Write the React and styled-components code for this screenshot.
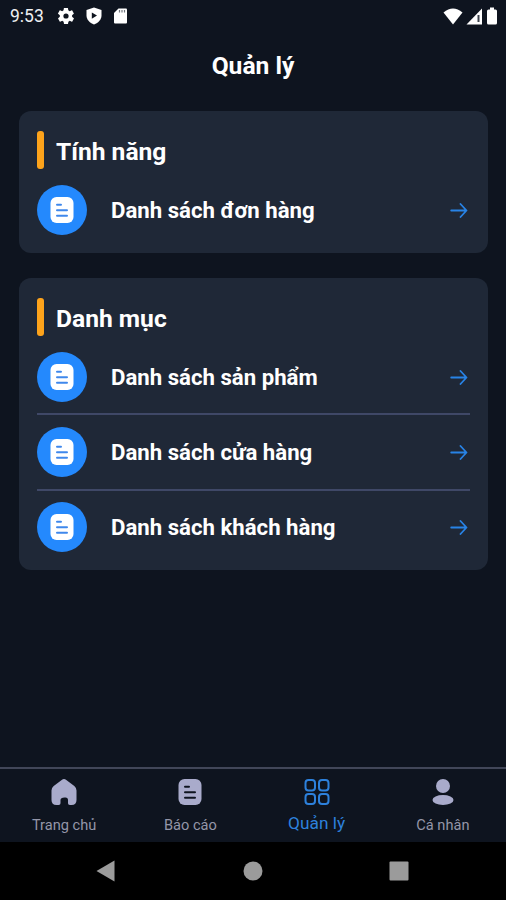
import React, {useState} from 'react'
import styled, {createGlobalStyle} from 'styled-components'

// STYLED COMPONENTS

const GlobalStyle = createGlobalStyle`
* {
    box-sizing: border-box;
}
body {
    margin: 0;
    background: #0e141f;
    font-family: Roboto, "Noto Sans", sans-serif;
}
`;

const Screen = styled.div`
display: flex;
flex-direction: column;
width: 506px;
height: 900px;
overflow: hidden;
background: #0e141f;
color: #fff;
`;

// Status bar styling
const StatusBar = styled.div`
display: flex;
justify-content: space-between;
align-items: center;
height: 32px;
padding: 0 8px 0 10px;
`;
const StatusGroup = styled.div`
display: flex;
align-items: center;
gap: ${props => props.$gap};
`;
const Clock = styled.span`
width: 36px;
font-size: 17.5px;
color: #eef0f3;
`;

const Title = styled.h1`
margin: 0;
height: 79px;
line-height: 68px;
text-align: center;
font-size: 24.6px;
font-weight: 700;
`;

// Cards with the menu rows
const Content = styled.div`
flex: 1;
display: flex;
flex-direction: column;
gap: 25px;
padding: 0 18px 0 19px;
`;
const Card = styled.section`
padding: 20px 18px 18px;
border-radius: 12px;
background: #1f2837;
`;
const CardHeading = styled.div`
display: flex;
align-items: center;
gap: 12px;
height: 38px;
margin-bottom: 16px;
`;
const Accent = styled.span`
width: 7px;
height: 38px;
border-radius: 3px;
background: #fda31b;
`;
const CardTitle = styled.h2`
margin: 0;
padding-top: 3px;
font-size: 24.6px;
line-height: 28px;
font-weight: 700;
`;
const Row = styled.div`
display: flex;
align-items: center;
cursor: pointer;
& + & {
    margin-top: 11px;
    padding-top: 12px;
    border-top: 2px solid #3f4867;
}
& + &:last-child {
    margin-top: 12px;
    padding-top: 11px;
}
`;
const RowIcon = styled.div`
display: flex;
align-items: center;
justify-content: center;
width: 50px;
height: 50px;
border-radius: 50%;
background: #2489fd;
`;
const RowLabel = styled.span`
flex: 1;
padding-left: 24px;
font-size: 22.2px;
line-height: 28px;
font-weight: 700;
`;

// Bottom tabs
const TabBar = styled.nav`
display: grid;
grid-template-columns: repeat(4, 1fr);
height: 75px;
padding-left: 1px;
border-top: 2px solid #414658;
`;
const Tab = styled.button`
all: unset;
display: flex;
flex-direction: column;
align-items: center;
padding-top: 10px;
cursor: pointer;
color: ${props => props.$active ? '#2d81dc' : '#a9abcb'};
`;
const TabLabel = styled.span`
margin-top: ${props => props.$active ? '8px' : '10px'};
font-size: ${props => props.$active ? '17.3px' : '14.6px'};
line-height: 20px;
color: ${props => props.$active ? '#2d81dc' : '#9496a8'};
`;

// Android navigation buttons
const SystemBar = styled.div`
display: grid;
grid-template-columns: 1fr 20px 1fr;
align-items: center;
height: 58px;
padding: 0 97px 0 96px;
background: #000;
& > :last-child {
    justify-self: end;
}
`;

// ICONS

const GearIcon = () => (
    <svg width="18" height="18" viewBox="1 1 22 22" fill="#fff">
        <path d="M19.4 13c0-.3.1-.6.1-1s0-.7-.1-1l2.1-1.600c.2-.2.2-.4.1-.6l-2-3.500c-.1-.2-.3-.3-.6-.2l-2.500 1c-.5-.4-1.100-.7-1.700-1l-.4-2.600c0-.2-.2-.4-.5-.4h-4c-.2 0-.4.2-.5.4L9 5.100c-.6.3-1.200.6-1.700 1l-2.500-1c-.2-.1-.5 0-.6.2l-2 3.500c-.1.2-.1.500.1.600L4.500 11c0 .3-.1.600-.1 1s0 .700.1 1l-2.100 1.600c-.2.2-.2.400-.1.600l2 3.500c.1.200.3.300.6.200l2.500-1c.500.400 1.100.700 1.700 1l.4 2.600c0 .200.2.400.5.400h4c.200 0 .400-.200.500-.400l.4-2.600c.600-.300 1.200-.600 1.700-1l2.500 1c.200.100.500 0 .600-.200l2-3.500c.100-.200.100-.500-.1-.600zM12 15.200a3.200 3.200 0 1 1 0-6.400 3.200 3.200 0 0 1 0 6.400z"/>
    </svg>
)

const ShieldIcon = () => (
    <svg width="16" height="18" viewBox="0 0 16 18">
        <path fill="#fff" d="M8 .5 15.500 3v5.500c0 4-3 7.200-7.500 9C3.500 15.700.5 12.500.5 8.500V3z"/>
        <path fill="#0e141f" d="M5.800 5.500v6.200L11 8.600z"/>
    </svg>
)

const SdCardIcon = () => (
    <svg width="15" height="16" viewBox="0 0 14 16">
        <path fill="#fff" d="M5 .5h7.500q1 0 1 1v13q0 1-1 1h-11q-1 0-1-1V5z"/>
        <path stroke="#72777f" strokeWidth="1.200" d="M6 2v2.500M8.500 2v2.500M11 2v2.500"/>
    </svg>
)

const WifiIcon = () => (
    <svg width="20" height="17" viewBox="0 0 20 17">
        <path fill="#fff" d="M.5 4.500Q10-3.300 19.500 4.500L10 16.500z"/>
    </svg>
)

const SignalIcon = () => (
    <svg width="17" height="17" viewBox="0 0 17 17">
        <path fill="#fff" d="M16 .5v16H.5z"/>
        <path fill="#3c424c" d="M11.500 7h2v7h-2z"/>
    </svg>
)

const BatteryIcon = () => (
    <svg width="12" height="18" viewBox="0 0 12 18">
        <path fill="#fff" d="M4 .5h4v2h1.500Q11 2.500 11 4v12q0 1.500-1.500 1.500h-7Q1 17.500 1 16V4q0-1.500 1.500-1.500H4z"/>
    </svg>
)

// Document with three lines, lines take the color behind the icon
const DocumentIcon = ({color, line}) => (
    <svg width="24" height="26" viewBox="0 0 24 26">
        <rect width="23" height="26" x=".5" rx="6" fill={color}/>
        <path d="M7 7.800h4M7 13.300h10M7 18.700h10" stroke={line} strokeWidth="2" strokeLinecap="round"/>
    </svg>
)

const ArrowIcon = () => (
    <svg width="20" height="16" viewBox="0 0 20 16" fill="none" stroke="#2883e6" strokeWidth="1.800" strokeLinecap="round" strokeLinejoin="round">
        <path d="M1.200 8.500H16M10.500 2 16.500 8.500l-6 6.500"/>
    </svg>
)

const HomeIcon = () => (
    <svg width="26" height="26" viewBox="0 0 26 26" fill="currentColor">
        <path d="M10.700.9q2.300-1.700 4.600 0l8 6.200Q25.500 9 25.500 11.500V21q0 5-5 5h-1.700q-1.800 0-1.800-1.800V21q0-2.500-2.500-2.500h-1Q9.500 18.500 9.500 21v3.200Q9.500 26 7.700 26H5.500q-5 0-5-5v-9.500Q.5 9 2.700 7.100z"/>
    </svg>
)

const GridIcon = () => (
    <svg width="26" height="26" viewBox="0 0 26 26" fill="none" stroke="currentColor" strokeWidth="2">
        <rect x="1.500" y="1" width="9.500" height="10.500" rx="3"/>
        <rect x="15" y="1" width="9.500" height="10.500" rx="3"/>
        <rect x="1.500" y="15" width="9.500" height="10" rx="3"/>
        <rect x="15" y="15" width="9.500" height="10" rx="3"/>
    </svg>
)

const UserIcon = () => (
    <svg width="26" height="26" viewBox="0 0 26 26" fill="currentColor">
        <circle cx="13" cy="7" r="7"/>
        <ellipse cx="13" cy="21" rx="10.500" ry="5"/>
    </svg>
)

// Sections shown on the page with their rows
const sections = [
    {title: 'Tính năng', rows: ['Danh sách đơn hàng']},
    {title: 'Danh mục', rows: ['Danh sách sản phẩm', 'Danh sách cửa hàng', 'Danh sách khách hàng']},
]

const tabs = [
    {name: 'Trang chủ', icon: <HomeIcon/>},
    {name: 'Báo cáo', icon: <DocumentIcon color="currentColor" line="#0e141f"/>},
    {name: 'Quản lý', icon: <GridIcon/>},
    {name: 'Cá nhân', icon: <UserIcon/>},
]

// Card with a heading and one row per list
const MenuCard = ({title, rows}) => (
    <Card>
        <CardHeading>
            <Accent/>
            <CardTitle>{title}</CardTitle>
        </CardHeading>
        {rows.map((label) => (
            <Row key={label}>
                <RowIcon><DocumentIcon color="#fff" line="#3f88ec"/></RowIcon>
                <RowLabel>{label}</RowLabel>
                <ArrowIcon/>
            </Row>
        ))}
    </Card>
)

const App = () => {
    const [current, setCurrent] = useState(2);

    return (
        <Screen>
            <GlobalStyle/>
            <StatusBar>
                <StatusGroup $gap="11px">
                    <Clock>9:53</Clock>
                    <GearIcon/>
                    <ShieldIcon/>
                    <SdCardIcon/>
                </StatusGroup>
                <StatusGroup $gap="3px">
                    <WifiIcon/>
                    <SignalIcon/>
                    <BatteryIcon/>
                </StatusGroup>
            </StatusBar>
            <Title>Quản lý</Title>
            <Content>
                {sections.map((section) => (
                    <MenuCard key={section.title} title={section.title} rows={section.rows}/>
                ))}
            </Content>
            <TabBar>
                {tabs.map((tab, index) => (
                    <Tab key={tab.name} $active={current === index} onClick={() => setCurrent(index)}>
                        {tab.icon}
                        <TabLabel $active={current === index}>{tab.name}</TabLabel>
                    </Tab>
                ))}
            </TabBar>
            <SystemBar>
                <svg width="19" height="22" viewBox="0 0 19 22"><path fill="#9b9b9b" d="M18.500.5v21L.5 11z"/></svg>
                <svg width="20" height="20" viewBox="0 0 20 20"><circle cx="10" cy="10" r="9.500" fill="#9b9b9b"/></svg>
                <svg width="20" height="20" viewBox="0 0 20 20"><rect x=".5" y=".5" width="19" height="19" rx="1" fill="#9b9b9b"/></svg>
            </SystemBar>
        </Screen>
    )
};

export default App
